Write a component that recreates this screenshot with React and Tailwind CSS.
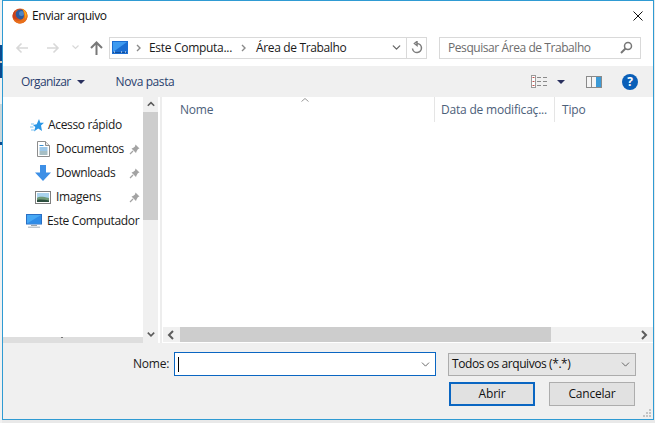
import { ChevronDown } from 'lucide-react'

const font = { fontFamily: '"Open Sans", "Noto Sans", sans-serif' }

function Firefox() {
  return (
    <svg width="16" height="16" viewBox="0 0 16 16">
      <circle cx="8" cy="8" r="7.500" fill="#d9541e" />
      <circle cx="8.500" cy="6.500" r="5" fill="#2c5a9e" />
      <circle cx="9.500" cy="5.500" r="2.500" fill="#4f86c6" />
      <path d="M10 .8c3 1 5.500 3.500 5.500 7.200 0 4-3.500 7.500-7.500 7.500-3.500 0-6.500-2.500-7.300-5.800C2 12 4.500 13 7 12.800c3-.3 5-2.500 5-5.300 0-3-1-5-2-6.700Z" fill="#e8701a" />
      <path d="M10 .8c2.500 1.200 4.300 3.200 4.500 6 .1 1.500-.3 3-1.300 4 .6-3.500-.5-7-3.200-10Z" fill="#fbb017" />
      <path d="M.7 9.700C.2 6.500 1.500 3.500 3.500 2c-.5 1.500-.5 3 0 4.500.5 2 1.500 3.500 3.500 4.500-2.500.5-5-.2-6.300-1.300Z" fill="#c9401c" />
    </svg>
  )
}

function Monitor({ w = 16, h = 14 }) {
  return (
    <svg width={w} height={h} viewBox="0 0 16 14">
      <rect x="0" y="0" width="16" height="10.500" fill="#2a6fc4" />
      <rect x="1" y="1" width="14" height="8.500" fill="#46a8f4" />
      <path d="M1 9.500 15 1v8.500Z" fill="#2f8ce8" />
      <rect x="5" y="11" width="6" height="1" fill="#9aa5ae" />
      <rect x="2" y="12.500" width="12" height="1.500" fill="#bfc7ce" />
    </svg>
  )
}

function AddressMonitor() {
  return (
    <svg width="16" height="13" viewBox="0 0 16 13">
      <rect width="16" height="13" fill="#1c6ed2" />
      <path d="M1 1h14L1 11Z" fill="#3f9bf0" />
      <rect x="1" y="11" width="14" height="1" fill="#0f4f9e" />
      <path d="M2 11h1M9 11h1M13 11h1" stroke="#fff" />
    </svg>
  )
}

function Star() {
  return (
    <svg width="14" height="13" viewBox="0 0 14 13">
      <path d="M9 0l1.300 3.800H14l-3 2.800 1 5.400-3.800-2.600L4 12.500l1.300-4.600-2.300-2 3.700-.6Z" fill="#2b97e6" />
      <path d="M1 5h3M0 8h3.500M1 11h3" stroke="#7cc3f2" strokeWidth="1.200" />
    </svg>
  )
}

function DocIcon() {
  return (
    <svg width="13" height="16" viewBox="0 0 13 16">
      <path d="M.5.500h8l4 4v11H.5Z" fill="#fff" stroke="#8d8d8d" />
      <path d="M8.500.500v4h4" fill="#e6e6e6" stroke="#8d8d8d" />
      <path d="M2.500 4.500h4M2.500 7h8M2.500 9h8" stroke="#3a8fd0" />
      <path d="M2.500 11h8M2.500 13h8" stroke="#4f7f8a" />
    </svg>
  )
}

function DownloadIcon() {
  return (
    <svg width="16" height="16" viewBox="0 0 16 16">
      <path d="M5 0h6v7.500h5L8 16 0 7.500h5Z" fill="#3d8fe6" />
    </svg>
  )
}

function PicIcon() {
  return (
    <svg width="16" height="13" viewBox="0 0 16 13">
      <rect x=".5" y=".5" width="15" height="12" fill="#fff" stroke="#7f7f7f" />
      <rect x="2" y="2" width="12" height="9" fill="#a9d3ee" />
      <path d="M2 7c3-2 6-1 12 0v4H2Z" fill="#6f9a78" />
      <path d="M2 9c4-1 8 0 12 .5V11H2Z" fill="#2c4f3f" />
    </svg>
  )
}

function Pin() {
  return (
    <svg width="11" height="11" viewBox="0 0 11 11" className="shrink-0">
      <path d="M6.500.5 10.500 4.500 9 5 7.500 7.500 7 9 2.500 4.500 4 4 6 2.500Z" fill="#a3a3a3" />
      <path d="M4 7 1 10" stroke="#a3a3a3" strokeWidth="1.200" />
    </svg>
  )
}

function NavRow({ icon, label, pin, iconW, gap, pl }) {
  return (
    <div className="flex items-center h-6" style={{ paddingLeft: pl }}>
      <div className="flex justify-center shrink-0" style={{ width: iconW, marginRight: gap }}>{icon}</div>
      <span className="text-[12px] text-[#1a1a1a] tracking-[-0.35px] whitespace-nowrap">{label}</span>
      {pin && <div className="ml-auto mr-[3px]"><Pin /></div>}
    </div>
  )
}

function ArrowSmall({ dir, color = '#5c5c5c' }) {
  const d = { up: 'M1 6 5 2l4 4', down: 'M1 2l4 4 4-4', left: 'M6 1 2 5l4 4', right: 'M2 1l4 4-4 4' }[dir]
  return (
    <svg width="10" height="10" viewBox="0 0 10 10" className={dir === 'up' || dir === 'down' ? 'h-2' : ''}>
      <path d={d} fill="none" stroke={color} strokeWidth="2" />
    </svg>
  )
}

function Crumb() {
  return (
    <svg width="5" height="8" viewBox="0 0 5 8" className="shrink-0">
      <path d="M1 1l3 3-3 3" fill="none" stroke="#8a8a8a" strokeWidth="1.400" />
    </svg>
  )
}

export default function App() {
  return (
    <div style={font} className="w-[655px] h-[423px] bg-[#e9e9e9] overflow-hidden relative">
      {/* bits of the page behind the dialog */}
      <div className="absolute left-0 top-0 w-[2px] h-[423px] bg-[#f1f1f1]" />
      <div className="absolute left-0 top-[45px] w-[2px] h-[33px] bg-[#0a4a8f]" />
      <div className="absolute left-0 top-[61px] w-[2px] h-[2px] bg-[#d8c8b8]" />
      <div className="absolute left-0 top-[104px] w-[2px] h-[38px] bg-[#c9d6da]" />
      <div className="absolute left-0 top-[142px] w-[2px] h-[3px] bg-[#0a4a8f]" />

      <div className="relative ml-[2px] w-[652px] h-[420px] border border-[#2f9bd3] bg-white flex flex-col">
        {/* title bar */}
        <div className="h-[29px] flex items-center pl-[9px] shrink-0">
          <Firefox />
          <span className="ml-[4px] text-[12px] tracking-[-0.4px] text-[#111]">Enviar arquivo</span>
          <svg className="ml-auto mr-[10px]" width="10" height="10" viewBox="0 0 10 10">
            <path d="M.5.500l9 9M9.500.500l-9 9" stroke="#111" strokeWidth="1" />
          </svg>
        </div>

        {/* address row */}
        <div className="h-[36px] flex items-center shrink-0 pb-[1px]">
          <div className="w-[106px] flex items-center pl-[12px] shrink-0">
            <svg width="14" height="12" viewBox="0 0 14 12"><path d="M13 6H2M6.500 1.500 2 6l4.500 4.500" fill="none" stroke="#d8d8d8" strokeWidth="1.600" /></svg>
            <svg className="ml-[17px]" width="14" height="12" viewBox="0 0 14 12"><path d="M1 6h11M7.500 1.500 12 6l-4.500 4.500" fill="none" stroke="#d8d8d8" strokeWidth="1.600" /></svg>
            <svg className="ml-[12px]" width="7" height="5" viewBox="0 0 7 5"><path d="M.5.500l3 3 3-3" fill="none" stroke="#d8d8d8" strokeWidth="1.200" /></svg>
            <svg className="ml-[11px]" width="13" height="14" viewBox="0 0 13 14"><path d="M6.500 14V2M1 7l5.500-5.500L12 7" fill="none" stroke="#787878" strokeWidth="2" /></svg>
          </div>
          <div className="w-[318px] h-[22px] border border-[#d9d9d9] flex items-center shrink-0">
            <div className="ml-[2px] flex"><AddressMonitor /></div>
            <div className="ml-[8px] flex"><Crumb /></div>
            <span className="ml-[8px] text-[12px] tracking-[-0.3px] text-[#1a1a1a] whitespace-nowrap">Este Computa...</span>
            <div className="ml-[9px] flex"><Crumb /></div>
            <span className="ml-[10px] text-[12px] tracking-[-0.35px] text-[#1a1a1a] whitespace-nowrap">Área de Trabalho</span>
            <ChevronDown size={13} strokeWidth={2.4} className="ml-auto mr-[3px] text-[#666]" />
            <div className="w-[20px] h-full border-l border-[#d9d9d9] flex items-center justify-center shrink-0">
              <svg width="12" height="13" viewBox="0 0 12 13"><path d="M6 2.500a4.500 4.500 0 1 1-4.500 5M6 .5v4L3.500 2.500Z" fill="none" stroke="#7d7d7d" strokeWidth="1.500" /></svg>
            </div>
          </div>
          <div className="ml-[12px] w-[202px] h-[22px] border border-[#d9d9d9] flex items-center pl-[8px] pr-[7px] shrink-0">
            <span className="text-[12px] tracking-[-0.43px] text-[#6d6d6d] whitespace-nowrap">Pesquisar Área de Trabalho</span>
            <svg className="ml-auto" width="13" height="13" viewBox="0 0 13 13"><circle cx="8" cy="5" r="3.500" fill="none" stroke="#777" strokeWidth="1.500" /><path d="M5.500 7.500 1 12" stroke="#777" strokeWidth="2" /></svg>
          </div>
        </div>

        {/* toolbar */}
        <div className="h-[31px] bg-[#f0f0f0] flex items-center shrink-0 pl-[18px]">
          <span className="text-[12px] tracking-[-0.6px] text-[#29406e]">Organizar</span>
          <span className="ml-[6px] w-0 h-0 border-x-[4px] border-x-transparent border-t-[4px] border-t-[#29305e]" />
          <span className="ml-[31px] text-[12px] tracking-[-0.4px] text-[#29406e]">Nova pasta</span>
          <svg className="ml-auto" width="17" height="13" viewBox="0 0 17 13">
            <rect x=".5" y=".5" width="4" height="12" fill="#fff" stroke="#9a9a9a" />
            <path d="M1.500 2.500h2M1.500 6.500h2M1.500 10.500h2" stroke="#c0504d" />
            <path d="M6 2.500h4M12 2.500h4M6 6.500h4M12 6.500h4M6 10.500h4M12 10.500h4" stroke="#8a8a8a" />
          </svg>
          <span className="ml-[9px] w-0 h-0 border-x-[4px] border-x-transparent border-t-[4px] border-t-[#29305e]" />
          <svg className="ml-[21px]" width="16" height="12" viewBox="0 0 16 12">
            <rect width="16" height="12" fill="#8a8a8a" />
            <rect x="1" y="1" width="4" height="10" fill="#f5f5f5" />
            <rect x="6" y="1" width="4" height="10" fill="#f5f5f5" />
            <rect x="10" y="1" width="5" height="10" fill="#3c9ad6" />
          </svg>
          <div className="ml-[20px] mr-[15px] w-4 h-4 rounded-full bg-[#0a5fb8] text-white text-[12px] font-bold flex items-center justify-center leading-none">?</div>
        </div>

        {/* main panes */}
        <div className="flex-1 flex min-h-0">
          <div className="w-[140px] shrink-0 flex flex-col">
            <div className="flex-1 pt-[16px]">
              <NavRow pl={27} iconW={14} gap={4} icon={<Star />} label="Acesso rápido" />
              <NavRow pl={34} iconW={13} gap={6} icon={<DocIcon />} label="Documentos" pin />
              <NavRow pl={32} iconW={16} gap={5} icon={<DownloadIcon />} label="Downloads" pin />
              <NavRow pl={32} iconW={16} gap={5} icon={<PicIcon />} label="Imagens" pin />
              <NavRow pl={23} iconW={16} gap={5} icon={<Monitor w={16} h={14} />} label="Este Computador" />
            </div>
            <div className="h-[6px] bg-[#dedede] pl-[56px]">
              <div className="w-[2px] h-[1px] bg-[#777] ml-[2px]" />
            </div>
          </div>
          <div className="w-[15px] shrink-0 bg-[#f0f0f0] flex flex-col items-center">
            <div className="h-[15px] flex items-center justify-center"><ArrowSmall dir="up" /></div>
            <div className="w-full h-[108px] bg-[#cdcdcd]" />
            <div className="flex-1" />
            <div className="h-[17px] flex items-center justify-center"><ArrowSmall dir="down" /></div>
          </div>
          <div className="w-[2px] shrink-0" />
          <div className="w-[2px] shrink-0 bg-[#ededed]" />
          <div className="w-[1px] shrink-0" />
          <div className="flex-1 flex flex-col min-w-0 relative">
            <svg className="absolute left-[138px] top-[1px]" width="8" height="4" viewBox="0 0 8 4"><path d="M.5 3.500l3.500-3 3.500 3" fill="none" stroke="#9a9a9a" /></svg>
            <div className="h-[25px] flex text-[12px] tracking-[-0.2px] text-[#4c607a] shrink-0">
              <div className="w-[272px] border-r border-[#e5e5e5] pl-[17px] pt-[4px]">Nome</div>
              <div className="w-[120px] border-r border-[#e5e5e5] pl-[6px] pt-[4px] whitespace-nowrap">Data de modificaç...</div>
              <div className="pl-[7px] pt-[4px]">Tipo</div>
            </div>
            <div className="flex-1" />
            <div className="h-[15px] flex mb-[1px] shrink-0 items-stretch">
              <div className="w-[17px] bg-[#f0f0f0] flex items-center justify-center"><ArrowSmall dir="left" /></div>
              <div className="w-[371px] bg-[#cdcdcd]" />
              <div className="flex-1 bg-[#f0f0f0] flex items-center justify-end pr-[3px]"><ArrowSmall dir="right" /></div>
            </div>
          </div>
        </div>

        {/* footer */}
        <div className="h-[76px] bg-[#f0f0f0] shrink-0 relative pt-[9px]">
          <div className="flex items-center h-[24px]">
            <span className="ml-[130px] w-[41px] text-[12px] tracking-[-0.2px] text-[#1a1a1a]">Nome:</span>
            <div className="w-[262px] h-[24px] border border-[#0a66c2] bg-white flex items-center pl-[3px]">
              <div className="w-[1px] h-[15px] bg-black" />
              <ChevronDown size={13} strokeWidth={1.6} className="ml-auto mr-[3px] text-[#555]" />
            </div>
            <div className="ml-[12px] w-[188px] h-[23px] border border-[#acacac] bg-[#e5e5e5] flex items-center pl-[3px]">
              <span className="text-[12px] tracking-[-0.42px] text-[#111] whitespace-nowrap">Todos os arquivos (*.*)</span>
              <ChevronDown size={13} strokeWidth={1.6} className="ml-auto mr-[3px] text-[#555]" />
            </div>
          </div>
          <div className="flex mt-[6px] pl-[446px]">
            <button className="w-[86px] h-[24px] border-2 border-[#0a66c2] bg-[#e1e1e1] text-[12px] tracking-[-0.2px] text-[#111]">Abrir</button>
            <button className="ml-[14px] w-[86px] h-[24px] border border-[#adadad] bg-[#e1e1e1] text-[12px] tracking-[-0.2px] text-[#111]">Cancelar</button>
          </div>
          <svg className="absolute right-[1px] bottom-[1px]" width="9" height="9" viewBox="0 0 9 9"><path d="M6 0h2v2H6ZM3 3h2v2H3ZM6 3h2v2H6ZM0 6h2v2H0ZM3 6h2v2H3ZM6 6h2v2H6Z" fill="#c4c4c4" /></svg>
        </div>
      </div>
    </div>
  )
}
